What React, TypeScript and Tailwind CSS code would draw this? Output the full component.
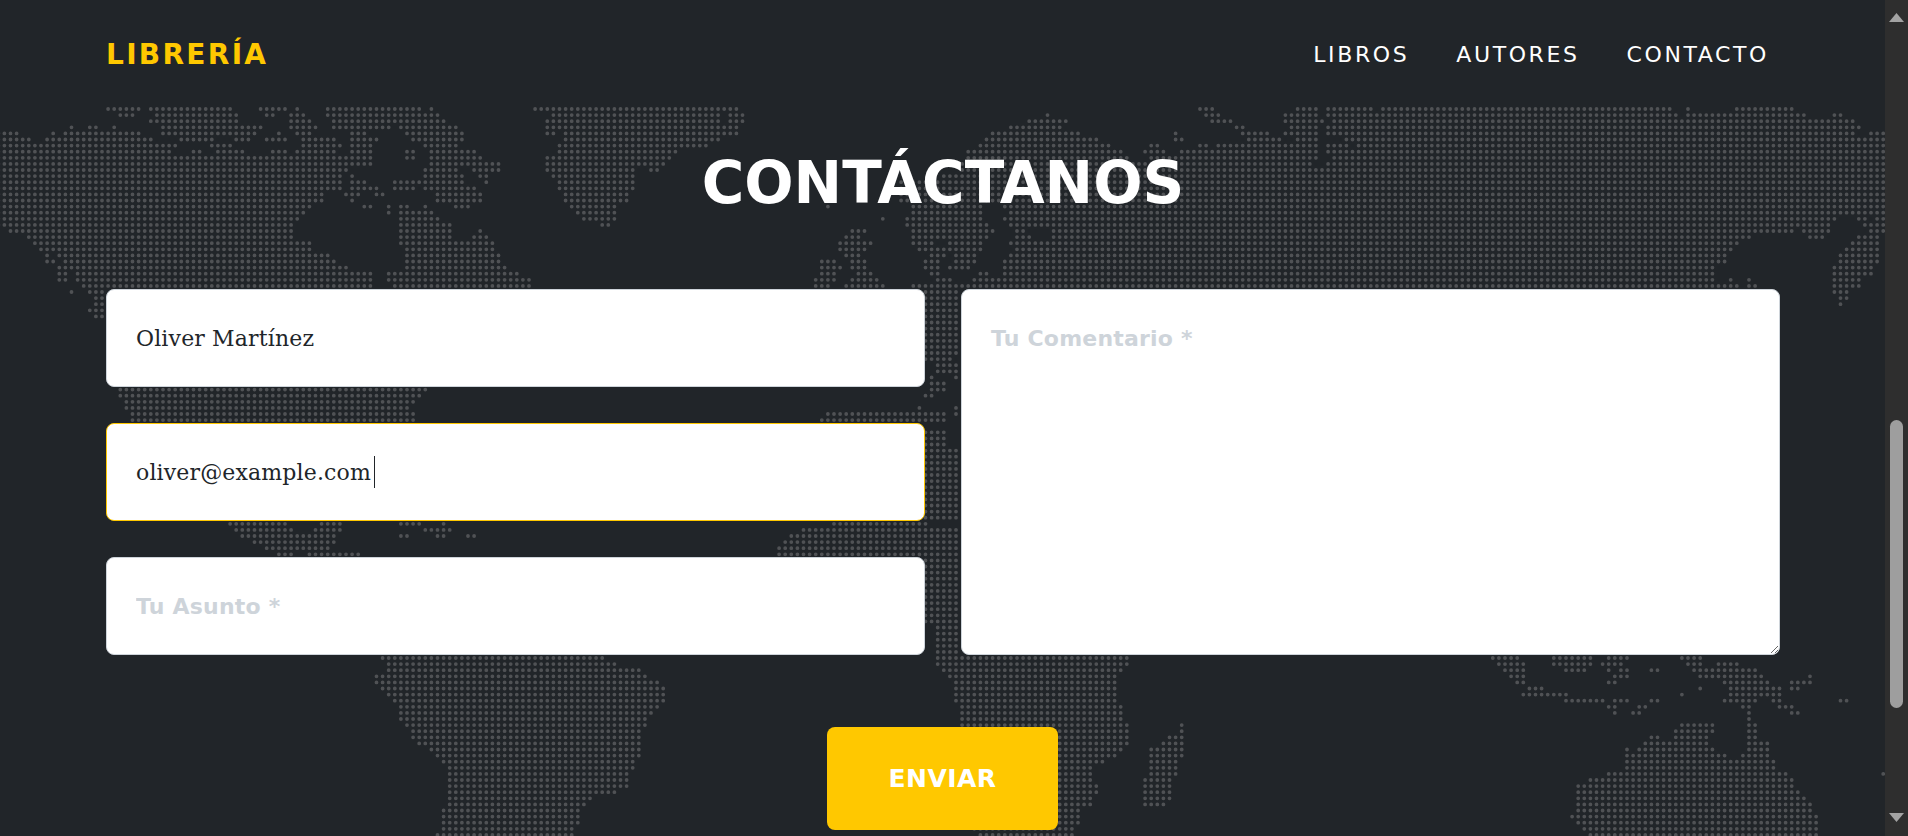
import React from 'react';

// Dot map: each row is [y, "x1-x2 x3-x4 ..."] in page pixels. Only what is not hidden by the form is listed.
const LAND: [number, string][] = [
  // north america + greenland, left part of the top band
  [109, '106-141 149-233 259-288 298-298 327-422 431-431 535-738 1199-1214'],
  [115, '118-135 155-239 265-276 290-306 327-441 551-720 728-744 1046-1046 1207-1220'],
  [121, '149-239 290-312 333-445 547-720 728-744 1028-1069 1212-1232'],
  [127, '69-74 88-98 112-116 161-263 290-318 333-392 400-459 547-740 1010-1063 1236-1244'],
  [133, '0-18 51-55 63-141 161-257 278-278 296-312 351-367 404-463 547-555 563-740 991-1081 1175-1175 1242-1260'],
  [139, '0-31 45-153 180-214 235-251 265-288 302-337 351-380 410-463 563-720 985-1099 1177-1185'],
  [145, '0-178 210-233 302-343 351-373 422-459 557-708 979-1112 1152-1159 1199-1207 1218-1260'],
  [151, '0-171 192-202 216-245 271-288 296-337 351-373 406-416 429-478 557-677 967-1124 1146-1165 1181-1260'],
  [157, '0-373 406-416 429-484 547-671 965-1130 1150-1260'],
  [163, '0-373 429-502 547-665 959-1260'],
  [169, '0-349 422-459 471-502 547-636 651-661 959-1260'],
  [175, '0-343 351-351 424-461 482-490 553-636 945-1260'],
  [181, '0-343 351-367 392-420 424-465 486-486 557-636 900-1260'],
  [187, '0-343 351-380 392-414 424-478 557-635 900-1260'],
  [193, '0-324 345-361 376-386 435-484 563-629 900-1260'],
  [199, '0-324 351-351 435-484 563-625 900-1260'],
  [205, '0-312 363-373 388-388 400-410 424-424 455-469 569-618 828-828 912-983 1006-1260'],
  [211, '0-306 388-388 400-433 576-616 912-983 1010-1260'],
  [217, '0-300 400-439 584-616 883-883 906-983 1006-1006 1010-1260'],
  [223, '0-294 400-451 600-612 906-989 1012-1260'],
  [229, '8-294 400-451 480-480 853-867 912-993 1016-1024 1052-1260'],
  [236, '27-294 400-451 471-488 844-861 912-989 1016-1030 1052-1260'],
  [242, '33-312 400-494 838-873 912-934 946-983 1010-1260'],
  [248, '39-312 406-494 838-867 918-934 938-983 1016-1260'],
  [254, '45-49 57-331 406-502 844-861 930-946 955-977 1010-1260'],
  [260, '45-55 63-337 406-502 820-836 851-867 924-940 955-977 1004-1260'],
  [266, '57-349 406-508 820-842 851-867 924-940 946-952 955-971 1004-1260'],
  [272, '57-67 76-373 388-520 820-836 855-873 930-940 981-989 1004-1260'],
  [278, '57-67 76-373 388-527 814-836 851-879 934-952 973-1260'],
  [284, '63-63 82-373 394-531 814-830 844-885 912-967 973-1260'],
  // asia, right part of the top band
  [109, '1295-1319 1328-1374 1381-1668 1689-1689 1736-1795'],
  [115, '1285-1319 1328-1352 1357-1674 1687-1807 1833-1844'],
  [121, '1285-1325 1332-1854'],
  [127, '1291-1319 1328-1862'],
  [133, '1250-1270 1285-1319 1328-1854 1870-1885'],
  [139, '1250-1283 1297-1319 1346-1885'],
  [145, '1250-1319 1330-1348 1356-1885'],
  [151, '1250-1319 1328-1885'],
  [157, '1250-1319 1332-1885'],
  [163, '1250-1311 1328-1885'],
  [169, '1250-1885'],
  [175, '1250-1885'],
  [181, '1250-1885'],
  [187, '1250-1885'],
  [193, '1250-1885'],
  [199, '1250-1885'],
  [205, '1250-1885'],
  [211, '1250-1885'],
  [217, '1250-1833 1858-1866 1874-1882'],
  [223, '1250-1829 1866-1885'],
  [229, '1250-1793 1803-1829 1870-1882'],
  [235, '1250-1750 1809-1825 1858-1878'],
  [241, '1250-1740 1852-1876'],
  [247, '1250-1731 1846-1878'],
  [253, '1250-1727 1840-1878'],
  [259, '1250-1727 1838-1878'],
  [265, '1250-1715 1834-1874'],
  [271, '1250-1711 1834-1874'],
  [277, '1250-1715 1730-1730 1750-1750 1834-1862'],
  [283, '1250-1738 1750-1758 1834-1862'],
  // left of the form
  [290, '72-72 90-106 1835-1850'],
  [296, '97-106 1838-1850'],
  [302, '97-106 1840-1843'],
  [308, '90-90 97-106'],
  [315, '97-106'],
  // column gap between the fields
  [290, '925-960'], [296, '925-960'], [302, '925-960'], [308, '925-960'], [315, '925-960'], [321, '925-960'],
  [327, '925-960'], [333, '925-960'], [339, '925-960'], [345, '925-960'], [351, '925-960'], [357, '925-953'],
  [363, '937-960'], [369, '937-960'], [375, '932-935 955-960'], [381, '932-942'], [388, '932-942'],
  [394, '925-935'], [406, '920-920 955-960'], [412, '955-960'],
  [430, '925-947'], [436, '925-942'], [442, '925-947'],
  [448, '925-960'], [455, '925-960'], [461, '925-960'], [467, '925-960'], [473, '925-960'], [479, '925-960'],
  [485, '925-960'], [491, '925-960'], [497, '925-960'], [503, '925-960'], [509, '925-960'], [516, '925-960'],
  [559, '925-960'], [565, '925-960'], [571, '925-960'], [577, '925-960'], [583, '925-960'], [589, '925-960'],
  [595, '925-960'], [601, '925-960'], [608, '925-960'], [614, '925-960'], [620, '925-960'], [626, '937-960'],
  [632, '937-960'], [638, '937-960'], [644, '937-960'], [650, '937-960'], [656, '937-960'],
  // gaps between the left fields
  [390, '118-428'], [396, '118-422'], [402, '125-415'], [408, '125-410'], [414, '130-415 826-942'], [420, '130-415 820-942'],
  [524, '228-288 320-343 399-422 443-443 830-925'],
  [530, '235-293 313-343 423-452 800-960'],
  [536, '240-337 399-410 437-447 467-477 790-960'],
  [542, '253-337 785-960'],
  [548, '265-330 780-960'],
  [554, '277-293 308-360 780-960'],
  // south america, africa, indonesia, australia
  [658, '382-605 937-1130 1492-1520 1554-1594 1608-1631 1681-1703'],
  [664, '388-617 937-1125 1499-1527 1554-1594 1601-1624 1687-1703 1719-1739'],
  [670, '388-642 943-1123 1506-1527 1565-1588 1608-1608 1619-1631 1651-1660 1694-1758'],
  [677, '375-647 948-1117 1511-1527 1615-1631 1701-1764 1810-1810'],
  [683, '375-660 955-1117 1517-1527 1608-1617 1724-1771 1792-1812'],
  [689, '382-666 955-1117 1529-1545 1701-1701 1730-1782 1792-1801'],
  [695, '388-666 955-1117 1523-1570 1683-1683 1730-1782'],
  [701, '395-666 955-1117 1565-1606 1615-1631 1651-1660 1724-1758 1773-1782 1841-1850'],
  [707, '400-660 962-1123 1608-1617 1637-1649 1744-1753 1780-1794'],
  [713, '400-653 962-1123 1615-1615 1633-1642 1749-1749 1792-1801'],
  [719, '400-647 962-1123 1749-1749'],
  [725, '407-647 962-1130 1182-1182 1683-1714 1749-1758'],
  [732, '413-640 962-1130 1182-1182 1676-1714 1749-1758'],
  [738, '413-640 1058-1130 1170-1183 1651-1660 1676-1708 1749-1758'],
  [744, '418-640 1058-1130 1163-1183 1646-1708 1749-1771'],
  [750, '432-640 1058-1123 1152-1183 1628-1628 1640-1714 1749-1771'],
  [756, '437-640 1058-1117 1152-1183 1628-1725 1744-1771'],
  [762, '443-635 1058-1105 1152-1178 1628-1776'],
  [768, '448-635 1058-1093 1152-1178 1628-1776'],
  [774, '448-628 1058-1093 1152-1178 1608-1789 1884-1884'],
  [780, '448-628 1058-1093 1145-1172 1590-1794'],
  [786, '448-628 1058-1098 1145-1172 1578-1794'],
  [792, '448-617 1058-1098 1145-1172 1578-1801'],
  [799, '448-592 1058-1093 1145-1172 1578-1807'],
  [805, '448-587 1058-1093 1145-1165 1578-1812'],
  [811, '443-580 1058-1082 1578-1812'],
  [817, '443-580 1058-1082 1572-1819'],
  [823, '443-580 1058-1082 1578-1819'],
  [829, '443-575 973-1075 1583-1819'],
  [835, '437-575 978-1070 1590-1819'],
];

const PITCH = 6.1;

const buildDots = () => {
  let d = '';
  for (const [y, ranges] of LAND) {
    const py = 109 + Math.round((y - 109) / PITCH) * PITCH;
    for (const range of ranges.split(' ')) {
      const [a, b] = range.split('-').map(Number);
      for (let k = Math.ceil((a - 6.4) / PITCH); 4.4 + k * PITCH <= b + 2; k++) {
        const px = 4.4 + k * PITCH;
        if (px < a - 2 || px > 1885) continue;
        d += `M${px.toFixed(1)} ${py.toFixed(1)}h0`;
      }
    }
  }
  return d;
};

const dots = buildDots();

const WorldMap = () => (
  <svg className="absolute top-0 left-0 pointer-events-none" width="1885" height="836" viewBox="0 0 1885 836" fill="none">
    <path d={dots} stroke="#505255" strokeWidth="3.8" strokeLinecap="round" />
  </svg>
);

const fieldClass =
  "w-full h-[98px] bg-white rounded-lg border border-[#ced4da] px-[29px] outline-none text-[#212529] text-[22px] tracking-[0.15px] font-['DejaVu_Serif',serif] placeholder:text-[#ced4da] placeholder:font-bold placeholder:text-[22px] placeholder:tracking-[0.2px] placeholder:font-['DejaVu_Sans',sans-serif]";

const Scrollbar = () => (
  <aside className="w-[23px] h-[836px] bg-[#2e2e2e] flex flex-col items-center justify-between shrink-0 relative">
    <svg className="mt-[13px]" width="15" height="9" viewBox="0 0 15 9">
      <path d="M7.5 0 15 9H0z" fill="#a3a3a3" />
    </svg>
    <div className="absolute top-[420px] left-[5px] w-[13px] h-[288px] bg-[#9e9e9e] rounded-full" />
    <svg className="mb-[14px]" width="15" height="9" viewBox="0 0 15 9">
      <path d="M0 0h15L7.5 9z" fill="#a3a3a3" />
    </svg>
  </aside>
);

const App: React.FC = () => {
  return (
    <div className="flex w-full h-[836px] overflow-hidden bg-[#212529]">
      <main className="relative flex-1 min-w-0 font-['DejaVu_Sans',sans-serif]">
        <WorldMap />
        <div className="relative w-[1674px] ml-[106px]">
          <header className="flex items-center justify-between h-[108px] pr-[11px]">
            <a className="pt-[2px] text-[28px] font-bold text-[#ffc800] tracking-[2.3px]">LIBRERÍA</a>
            <nav className="flex gap-[47px] text-white text-[22px] tracking-[2.6px]">
              <a>LIBROS</a>
              <a>AUTORES</a>
              <a>CONTACTO</a>
            </nav>
          </header>
          <h1 className="h-[146px] mb-[35px] pt-[5px] flex items-center justify-center text-white text-[58px] font-bold">
            CONTÁCTANOS
          </h1>
          <form>
            <div className="grid grid-cols-2 gap-x-9">
              <div className="flex flex-col gap-9">
                <input className={fieldClass} defaultValue="Oliver Martínez" />
                <div className="relative">
                  <input className={`${fieldClass} border-[#ffc800]`} defaultValue="oliver@example.com" />
                  <span className="absolute left-[268px] top-[33px] w-px h-[32px] bg-[#212529]" />
                </div>
                <input className={fieldClass} placeholder="Tu Asunto *" />
              </div>
              <textarea className={`${fieldClass} h-[366px] py-[32px]`} placeholder="Tu Comentario *" />
            </div>
            <div className="flex justify-center mt-[72px]">
              <button
                type="button"
                className="w-[231px] h-[103px] mr-[1px] bg-[#ffc800] rounded-lg text-white text-[25px] font-bold tracking-[0.5px]"
              >
                ENVIAR
              </button>
            </div>
          </form>
        </div>
      </main>
      <Scrollbar />
    </div>
  );
};

export default App;
